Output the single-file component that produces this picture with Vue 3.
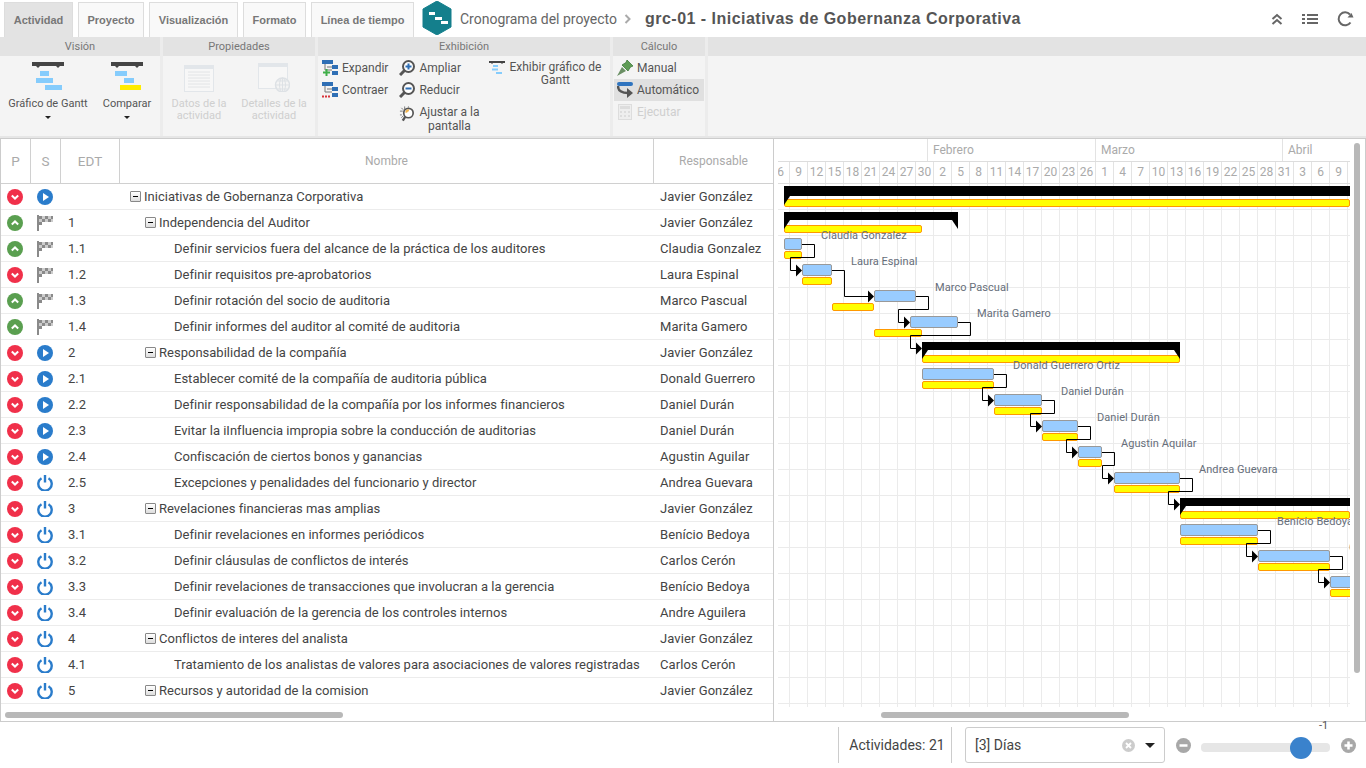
<script setup>
import { computed } from 'vue'

const ROW_H = 26
const X0 = 778 // chart left edge on the page

const tabs = ['Actividad', 'Proyecto', 'Visualización', 'Formato', 'Línea de tiempo']

const rows = [
  { p: 'down', s: 'play', edt: '', name: 'Iniciativas de Gobernanza Corporativa', who: 'Javier González', level: 0 },
  { p: 'up', s: 'flag', edt: '1', name: 'Independencia del Auditor', who: 'Javier González', level: 1 },
  { p: 'up', s: 'flag', edt: '1.1', name: 'Definir servicios fuera del alcance de la práctica de los auditores', who: 'Claudia Gonzalez', level: 2 },
  { p: 'down', s: 'flag', edt: '1.2', name: 'Definir requisitos pre-aprobatorios', who: 'Laura Espinal', level: 2 },
  { p: 'up', s: 'flag', edt: '1.3', name: 'Definir rotación del socio de auditoria', who: 'Marco Pascual', level: 2 },
  { p: 'up', s: 'flag', edt: '1.4', name: 'Definir informes del auditor al comité de auditoria', who: 'Marita Gamero', level: 2 },
  { p: 'down', s: 'play', edt: '2', name: 'Responsabilidad de la compañía', who: 'Javier González', level: 1 },
  { p: 'down', s: 'play', edt: '2.1', name: 'Establecer comité de la compañía de auditoria pública', who: 'Donald Guerrero', level: 2 },
  { p: 'down', s: 'play', edt: '2.2', name: 'Definir responsabilidad de la compañía por los informes financieros', who: 'Daniel Durán', level: 2 },
  { p: 'down', s: 'play', edt: '2.3', name: 'Evitar la iInfluencia impropia sobre la conducción de auditorias', who: 'Daniel Durán', level: 2 },
  { p: 'down', s: 'play', edt: '2.4', name: 'Confiscación de ciertos bonos y ganancias', who: 'Agustin Aguilar', level: 2 },
  { p: 'down', s: 'power', edt: '2.5', name: 'Excepciones y penalidades del funcionario y director', who: 'Andrea Guevara', level: 2 },
  { p: 'down', s: 'power', edt: '3', name: 'Revelaciones financieras mas amplias', who: 'Javier González', level: 1 },
  { p: 'down', s: 'power', edt: '3.1', name: 'Definir revelaciones en informes periódicos', who: 'Benício Bedoya', level: 2 },
  { p: 'down', s: 'power', edt: '3.2', name: 'Definir cláusulas de conflictos de interés', who: 'Carlos Cerón', level: 2 },
  { p: 'down', s: 'power', edt: '3.3', name: 'Definir revelaciones de transacciones que involucran a la gerencia', who: 'Benício Bedoya', level: 2 },
  { p: 'down', s: 'power', edt: '3.4', name: 'Definir evaluación de la gerencia de los controles internos', who: 'Andre Aguilera', level: 2 },
  { p: 'down', s: 'power', edt: '4', name: 'Conflictos de interes del analista', who: 'Javier González', level: 1 },
  { p: 'down', s: 'power', edt: '4.1', name: 'Tratamiento de los analistas de valores para asociaciones de valores registradas', who: 'Carlos Cerón', level: 2 },
  { p: 'down', s: 'power', edt: '5', name: 'Recursos y autoridad de la comision', who: 'Javier González', level: 1 }
]

const months = [
  { label: '', width: 150 },
  { label: 'Febrero', width: 168 },
  { label: 'Marzo', width: 187 },
  { label: 'Abril', width: 67 }
]
const days = [6, 9, 12, 15, 18, 21, 24, 27, 30, 2, 5, 8, 11, 14, 17, 20, 23, 26, 1, 4, 7, 10, 13, 16, 19, 22, 25, 28, 31, 3, 6, 9]

// row index, actual bar x1-x2, baseline bar x1-x2
const summaries = [
  { row: 0, x1: 784, x2: 1350, by1: 784, by2: 1350, open: true },
  { row: 1, x1: 784, x2: 958, by1: 784, by2: 922 },
  { row: 6, x1: 922, x2: 1180, by1: 922, by2: 1180 },
  { row: 12, x1: 1180, x2: 1350, by1: 1180, by2: 1350, open: true }
]
const tasks = [
  { row: 2, x1: 784, x2: 802, by1: 784, by2: 802 },
  { row: 3, x1: 802, x2: 832, by1: 802, by2: 832 },
  { row: 4, x1: 874, x2: 916, by1: 832, by2: 874 },
  { row: 5, x1: 910, x2: 958, by1: 874, by2: 922 },
  { row: 7, x1: 922, x2: 994, by1: 922, by2: 994 },
  { row: 8, x1: 994, x2: 1042, by1: 994, by2: 1042 },
  { row: 9, x1: 1042, x2: 1078, by1: 1042, by2: 1078 },
  { row: 10, x1: 1078, x2: 1102, by1: 1078, by2: 1102 },
  { row: 11, x1: 1114, x2: 1180, by1: 1114, by2: 1180 },
  { row: 13, x1: 1180, x2: 1258, by1: 1180, by2: 1258 },
  { row: 14, x1: 1258, x2: 1330, by1: 1258, by2: 1330 },
  { row: 15, x1: 1330, x2: 1360, by1: 1330, by2: 1360 }
]
const labels = [
  { row: 2, x: 821, text: 'Claudia Gonzalez' },
  { row: 3, x: 851, text: 'Laura Espinal' },
  { row: 4, x: 935, text: 'Marco Pascual' },
  { row: 5, x: 977, text: 'Marita Gamero' },
  { row: 7, x: 1013, text: 'Donald Guerrero Ortiz' },
  { row: 8, x: 1061, text: 'Daniel Durán' },
  { row: 9, x: 1097, text: 'Daniel Durán' },
  { row: 10, x: 1121, text: 'Agustin Aquilar' },
  { row: 11, x: 1199, text: 'Andrea Guevara' },
  { row: 13, x: 1277, text: 'Benício Bedoya' },
  { row: 14, x: 1349, text: 'Carlos Cerón' }
]
// from row, to row, target x
const links = [
  [2, 3, 802], [3, 4, 874], [4, 5, 910], [5, 6, 922], [7, 8, 994], [8, 9, 1042],
  [9, 10, 1078], [10, 11, 1114], [11, 12, 1180], [13, 14, 1258], [14, 15, 1330]
]

const rowTop = (r) => r * ROW_H
const left = (x) => x - X0

const barBox = (x1, x2, top, h) => ({
  left: left(x1) + 'px',
  width: x2 - x1 + 'px',
  top: top + 'px',
  height: h + 'px'
})

const linkPaths = computed(() =>
  links.map(([from, to, tx]) => {
    const src = tasks.find((t) => t.row === from)
    const sx = left(src.x2)
    const ex = left(tx)
    const y1 = rowTop(from) + 8.5
    const y2 = rowTop(to) + 8.5
    const mid = y1 + 13
    let d
    if (sx + 12 <= ex - 6) {
      d = `M${sx} ${y1}H${sx + 12.5}V${y2}H${ex - 6}`
    } else {
      d = `M${sx} ${y1}H${sx + 12.5}V${mid}H${ex - 11.5}V${y2}H${ex - 6}`
    }
    return { d, arrow: `${ex - 6},${y2 - 6} ${ex},${y2} ${ex - 6},${y2 + 6}` }
  })
)

const summaryShapes = computed(() =>
  summaries.map((s) => {
    const x1 = left(s.x1)
    const x2 = left(s.x2)
    const top = rowTop(s.row) + 2
    const h = s.row === 0 ? 10 : 8
    const pts = [`${x1},${top + h} ${x1 + 6},${top + h} ${x1},${top + h + 9}`]
    if (!s.open) pts.push(`${x2},${top + h} ${x2 - 6},${top + h} ${x2},${top + h + 9}`)
    return { key: s.row, x: x1, y: top, w: x2 - x1, h, pts }
  })
)
</script>

<template>
  <div class="app">
    <header class="topbar">
      <div
        v-for="(t, i) in tabs"
        :key="t"
        class="tab"
        :class="{ active: i === 0 }"
      >{{ t }}</div>
      <svg class="logo" width="30" height="34" viewBox="0 0 30 34">
        <polygon points="15,0 29,8 29,26 15,34 1,26 1,8" fill="#147f8c" stroke="#147f8c" stroke-linejoin="round" />
        <rect x="7" y="11" width="6" height="3" fill="#fff" />
        <rect x="13" y="16" width="7" height="3" fill="#fff" />
        <rect x="19" y="20" width="7" height="3" fill="#fff" />
      </svg>
      <span class="crumb">Cronograma del proyecto</span>
      <svg class="crumb-sep" width="8" height="10" viewBox="0 0 8 10">
        <path d="M1.5 1l4 4-4 4" fill="none" stroke="#aaa" stroke-width="2" />
      </svg>
      <span class="title">grc-01 - Iniciativas de Gobernanza Corporativa</span>
      <div class="top-actions">
        <svg width="12" height="12" viewBox="0 0 12 12">
          <path d="M1.500 6l4.500-4 4.500 4M1.500 11l4.500-4 4.500 4" fill="none" stroke="#666" stroke-width="2" />
        </svg>
        <svg width="16" height="12" viewBox="0 0 16 12">
          <path d="M0 2h3M5 2h11M0 6h3M5 6h11M0 10h3M5 10h11" stroke="#666" stroke-width="2" />
        </svg>
        <svg width="17" height="16" viewBox="0 0 17 16">
          <path d="M13.500 11.500A6.500 6.500 0 1 1 13 3.500" fill="none" stroke="#666" stroke-width="2" />
          <polygon points="10.500,6.500 16.500,6.500 14.500,2" fill="#666" />
        </svg>
      </div>
    </header>

    <section class="ribbon">
      <div class="group g-vision">
        <div class="group-head">Visión</div>
        <div class="group-body big-row">
          <div class="big-btn b1">
            <svg width="32" height="29" viewBox="0 0 32 29">
              <path d="M0 0h32v4h-4l-2 2-2-2H8L6 6 4 4H0z" fill="#444" />
              <rect x="8" y="9" width="9" height="5" fill="#85ccfc" />
              <rect x="4" y="16" width="17" height="5" fill="#85ccfc" />
              <rect x="13" y="23" width="17" height="5" fill="#85ccfc" />
            </svg>
            <span class="big-label">Gráfico de Gantt</span>
            <span class="caret"></span>
          </div>
          <div class="big-btn b2">
            <svg width="32" height="29" viewBox="0 0 32 29">
              <path d="M0 0h32v4h-4l-2 2-2-2H8L6 6 4 4H0z" fill="#444" />
              <rect x="4" y="9" width="12" height="5" fill="#85ccfc" />
              <rect x="13" y="16" width="10" height="5" fill="#85ccfc" />
              <rect x="9" y="23" width="21" height="5" fill="#ffec00" />
            </svg>
            <span class="big-label">Comparar</span>
            <span class="caret"></span>
          </div>
        </div>
      </div>

      <div class="group g-props">
        <div class="group-head">Propiedades</div>
        <div class="group-body big-row">
          <div class="big-btn b3 disabled">
            <svg width="32" height="29" viewBox="0 0 32 29">
              <rect x="1.500" y="1.500" width="29" height="26" fill="#f7f7f7" stroke="#e2e6ea" />
              <rect x="1" y="1" width="30" height="4" fill="#e2e6ea" />
              <path d="M5 8h22M5 11h22M5 14h22M5 17h22M5 20h22M5 23h22" stroke="#e2e4e6" />
            </svg>
            <span class="big-label">Datos de la<br />actividad</span>
          </div>
          <div class="big-btn b4 disabled">
            <svg width="32" height="29" viewBox="0 0 32 29">
              <rect x="0.500" y="0.500" width="29" height="25" fill="#f7f7f7" stroke="#e2e6ea" />
              <rect x="0" y="0" width="30" height="4" fill="#e2e6ea" />
              <circle cx="24.500" cy="22" r="7" fill="#f4f4f4" stroke="#dde1e5" stroke-width="1.500" />
              <path d="M17.500 22h14M24.500 15v14M19.500 18h10M19.500 26h10" stroke="#dde1e5" />
              <ellipse cx="24.500" cy="22" rx="3" ry="7" fill="none" stroke="#dde1e5" />
            </svg>
            <span class="big-label">Detalles de la<br />actividad</span>
          </div>
        </div>
      </div>

      <div class="group g-show">
        <div class="group-head">Exhibición</div>
        <div class="group-body show-body">
          <div class="show-col">
            <div class="small-btn">
              <svg width="16" height="16" viewBox="0 0 16 16">
                <rect x="0" y="0" width="11" height="4" fill="#2f6fb5" />
                <rect x="10" y="5" width="6" height="4" fill="#2f6fb5" />
                <rect x="10" y="11" width="6" height="4" fill="#2f6fb5" />
                <path d="M3 4v6h7M5 7h5" fill="none" stroke="#777" />
                <path d="M1 12.500h7M4.500 9v7" stroke="#3fae49" stroke-width="2" />
              </svg>
              <span>Expandir</span>
            </div>
            <div class="small-btn">
              <svg width="16" height="16" viewBox="0 0 16 16">
                <rect x="0" y="0" width="11" height="4" fill="#2f6fb5" />
                <rect x="10" y="5" width="6" height="4" fill="#2f6fb5" />
                <rect x="10" y="11" width="6" height="4" fill="#2f6fb5" />
                <path d="M3 4v6h7M5 7h5" fill="none" stroke="#777" />
                <path d="M0 14.500h9" stroke="#d8333a" stroke-width="2" stroke-dasharray="2 1" />
              </svg>
              <span>Contraer</span>
            </div>
          </div>
          <div class="show-col col-zoom">
            <div class="small-btn">
              <svg width="16" height="16" viewBox="0 0 16 16">
                <circle cx="9.500" cy="6.500" r="5.500" fill="#fff" stroke="#555" stroke-width="2" />
                <path d="M5.500 10.500L1 15" stroke="#555" stroke-width="3" />
                <path d="M6.500 6.500h6M9.500 3.500v6" stroke="#2f6fb5" stroke-width="2" />
              </svg>
              <span>Ampliar</span>
            </div>
            <div class="small-btn">
              <svg width="16" height="16" viewBox="0 0 16 16">
                <circle cx="9.500" cy="6.500" r="5.500" fill="#fff" stroke="#555" stroke-width="2" />
                <path d="M5.500 10.500L1 15" stroke="#555" stroke-width="3" />
                <path d="M6.500 6.500h6" stroke="#2f6fb5" stroke-width="2" />
              </svg>
              <span>Reducir</span>
            </div>
            <div class="small-btn fit-btn">
              <svg width="17" height="17" viewBox="0 0 17 17">
                <path d="M6 1v3M1 6h3M2.500 2.500l2 2M1 10h2M10 2V1M2.500 13l2-2" stroke="#777" />
                <circle cx="10" cy="8" r="5" fill="#fff" stroke="#555" stroke-width="1.800" />
                <path d="M7.500 7.500a3 3 0 0 1 3-2.500" fill="none" stroke="#f0b24a" stroke-width="2" />
                <path d="M6.500 12L4 16" stroke="#555" stroke-width="2.500" />
              </svg>
              <span class="fit-text">Ajustar a la<br />pantalla</span>
            </div>
          </div>
          <div class="show-col col-gantt">
            <svg width="16" height="14" viewBox="0 0 16 14">
              <path d="M0 0h16v2h-2l-1 1-1-1H4L3 3 2 2H0z" fill="#444" />
              <rect x="4" y="4" width="5" height="2" fill="#85ccfc" />
              <rect x="3" y="7.500" width="6" height="2" fill="#85ccfc" />
              <rect x="7" y="11" width="6" height="2" fill="#85ccfc" />
            </svg>
            <span class="gantt-text">Exhibir gráfico de<br />Gantt</span>
          </div>
        </div>
      </div>

      <div class="group g-calc">
        <div class="group-head">Cálculo</div>
        <div class="group-body calc-body">
          <div class="calc-btn">
            <svg width="16" height="17" viewBox="0 0 16 17">
              <path d="M10 0l6 6-2.500 1-2.500 4-6-6 4-2.500z" fill="#5e9c55" stroke="#3f7a3c" stroke-width="0.800" />
              <path d="M5 7L0 16l9-5" fill="#6a8f64" />
            </svg>
            <span>Manual</span>
          </div>
          <div class="calc-btn selected">
            <svg width="16" height="17" viewBox="0 0 16 17">
              <rect x="0" y="0" width="16" height="4" rx="2" fill="#2f74bf" />
              <path d="M1 4c0 5 4 7 10 7" fill="none" stroke="#555" stroke-width="2.400" />
              <polygon points="10,6 16,11 10,16" fill="#555" />
            </svg>
            <span>Automático</span>
          </div>
          <div class="calc-btn disabled">
            <svg width="16" height="16" viewBox="0 0 16 16">
              <rect x="1.500" y="0.500" width="13" height="15" fill="#eee" stroke="#ddd" />
              <rect x="3" y="2" width="10" height="3" fill="#ddd" />
              <path d="M3 7h2v2H3zM7 7h2v2H7zM11 7h2v2h-2zM3 11h2v2H3zM7 11h2v2H7zM11 11h2v2h-2z" fill="#ddd" />
            </svg>
            <span>Ejecutar</span>
          </div>
        </div>
      </div>

      <div class="group g-rest">
        <div class="group-head"></div>
        <div class="group-body"></div>
      </div>
    </section>

    <main class="main">
      <div class="table-panel">
        <div class="thead">
          <div class="th">P</div>
          <div class="th">S</div>
          <div class="th">EDT</div>
          <div class="th">Nombre</div>
          <div class="th last">Responsable</div>
        </div>
        <div class="tbody">
          <div v-for="r in rows" :key="r.edt + r.name" class="tr">
            <div class="td td-icon">
              <svg width="16" height="16" viewBox="0 0 16 16">
                <circle cx="8" cy="8" r="8" :fill="r.p === 'down' ? '#f0304a' : '#5a9f50'" />
                <path
                  :d="r.p === 'down' ? 'M4.800 6.600L8 9.600l3.200-3' : 'M4.800 9.400L8 6.400l3.200 3'"
                  fill="none"
                  stroke="#fff"
                  stroke-width="2"
                />
              </svg>
            </div>
            <div class="td td-icon">
              <svg v-if="r.s === 'play'" width="16" height="16" viewBox="0 0 16 16">
                <circle cx="8" cy="8" r="8" fill="#2a7ccb" />
                <polygon points="6,4 12,8 6,12" fill="#fff" />
              </svg>
              <svg v-else-if="r.s === 'power'" width="16" height="17" viewBox="0 0 16 17">
                <path d="M4.500 4.200a6.700 6.700 0 1 0 7 0" fill="none" stroke="#2a7ccb" stroke-width="2.400" />
                <path d="M8 1v7.500" stroke="#2a7ccb" stroke-width="2.400" />
              </svg>
              <svg v-else width="16" height="17" viewBox="0 0 16 17">
                <path d="M0 1h2v16H0z" fill="#8a8a8a" />
                <path d="M2 2h3v3H2zM8 2h3v3H8zM14 2h2v3h-2zM5 5h3v3H5zM11 5h3v3h-3zM2 8h3v3H2z" fill="#8a8a8a" />
                <path d="M5 2h3v3H5zM11 2h3v3h-3zM2 5h3v3H2zM8 5h3v3H8zM14 5h2v3h-2z" fill="#ccc" />
              </svg>
            </div>
            <div class="td td-edt">{{ r.edt }}</div>
            <div class="td td-name" :class="'level-' + r.level">
              <span v-if="r.level < 2" class="minus"></span>
              <span class="name-text">{{ r.name }}</span>
            </div>
            <div class="td td-who">{{ r.who }}</div>
          </div>
        </div>
        <div class="hscroll hscroll-left"></div>
      </div>

      <div class="gantt-panel">
        <div class="chart">
          <div class="months">
            <div
              v-for="(m, i) in months"
              :key="i"
              class="month"
              :style="{ width: m.width + 'px' }"
            >{{ m.label }}</div>
          </div>
          <div class="days">
            <div v-for="(d, i) in days" :key="i" class="day">{{ d }}</div>
          </div>
          <div class="chart-body">
            <template v-for="s in summaries" :key="s.row">
              <div class="bar-base" :style="barBox(s.by1, s.by2, rowTop(s.row) + 15, 8)"></div>
            </template>
            <template v-for="t in tasks" :key="t.row">
              <div class="bar-base" :style="barBox(t.by1, t.by2, rowTop(t.row) + 15, 8)"></div>
              <div class="bar-task" :style="barBox(t.x1, t.x2, rowTop(t.row) + 2, 12)"></div>
            </template>
            <svg class="links" width="572" height="523">
              <g v-for="s in summaryShapes" :key="s.key">
                <rect :x="s.x" :y="s.y" :width="s.w" :height="s.h" fill="#000" />
                <polygon v-for="p in s.pts" :key="p" :points="p" fill="#000" />
              </g>
              <g v-for="(l, i) in linkPaths" :key="i">
                <path :d="l.d" fill="none" stroke="#000" stroke-width="1" />
                <polygon :points="l.arrow" fill="#000" />
              </g>
            </svg>
            <span
              v-for="l in labels"
              :key="l.row"
              class="bar-label"
              :style="{ left: left(l.x) + 'px', top: rowTop(l.row) - 7 + 'px' }"
            >{{ l.text }}</span>
          </div>
        </div>
        <div class="vscroll"></div>
        <div class="hscroll hscroll-right"></div>
      </div>
    </main>

    <footer class="footer">
      <div class="count">Actividades: 21</div>
      <div class="select">
        <span class="select-value">[3] Días</span>
        <svg class="select-clear" width="13" height="13" viewBox="0 0 13 13">
          <circle cx="6.500" cy="6.500" r="6.500" fill="#ccc" />
          <path d="M4 4l5 5M9 4l-5 5" stroke="#fff" stroke-width="1.800" />
        </svg>
        <span class="select-caret"></span>
      </div>
      <svg class="zoom-btn" width="15" height="15" viewBox="0 0 15 15">
        <circle cx="7.500" cy="7.500" r="7.500" fill="#a8a8a8" />
        <path d="M3.500 7.500h8" stroke="#fff" stroke-width="2.500" />
      </svg>
      <div class="slider">
        <span class="slider-value">-1</span>
        <span class="slider-thumb"></span>
      </div>
      <svg class="zoom-btn" width="15" height="15" viewBox="0 0 15 15">
        <circle cx="7.500" cy="7.500" r="7.500" fill="#a8a8a8" />
        <path d="M3.500 7.500h8M7.500 3.500v8" stroke="#fff" stroke-width="2.500" />
      </svg>
    </footer>
  </div>
</template>

<style scoped>
.app {
  width: 1366px;
  height: 768px;
  overflow: hidden;
  display: flex;
  flex-direction: column;
  background: #fff;
  font-family: Roboto, "Liberation Sans", sans-serif;
  color: #444;
}

.topbar {
  height: 37px;
  flex: none;
  display: flex;
  align-items: flex-end;
  padding-left: 4px;
  box-sizing: border-box;
}

.tab {
  height: 35px;
  box-sizing: border-box;
  margin-right: 5px;
  display: flex;
  align-items: center;
  justify-content: center;
  font-family: "Liberation Sans", sans-serif;
  font-size: 11px;
  font-weight: 700;
  color: #777;
  background: #f9f9f9;
  border: 1px solid #ddd;
  border-bottom: none;
}

.tab:nth-child(1) { width: 69px; }
.tab:nth-child(2) { width: 66px; }
.tab:nth-child(3) { width: 89px; }
.tab:nth-child(4) { width: 63px; }
.tab:nth-child(5) { width: 103px; }

.tab.active {
  background: #e3e3e3;
}

.logo {
  margin: 0 0 2px 3px;
}

.crumb {
  margin-left: 8px;
  align-self: center;
  font-size: 14px;
  color: #666;
}

.crumb-sep {
  align-self: center;
  margin: 0 13px 0 7px;
}

.title {
  align-self: center;
  font-family: "Liberation Sans", sans-serif;
  font-size: 16px;
  font-weight: 700;
  letter-spacing: 0.48px;
  color: #555;
}

.top-actions {
  margin-left: auto;
  align-self: center;
  display: flex;
  align-items: center;
  gap: 19px;
  padding: 0 12px 0 0;
}

.ribbon {
  height: 99px;
  flex: none;
  display: flex;
  gap: 3px;
  background: #ececec;
  border-bottom: 2px solid #e6e6e6;
}

.group {
  display: flex;
  flex-direction: column;
  background: #f4f4f4;
}

.g-vision { width: 160px; }
.g-props { width: 152px; }
.g-show { width: 292px; }
.g-calc { width: 92px; }
.g-rest { flex: 1; }

.group-head {
  height: 19px;
  flex: none;
  background: #e3e3e3;
  text-align: center;
  font-size: 11px;
  line-height: 19px;
  color: #777;
}

.group-body {
  flex: 1;
  position: relative;
  font-size: 12px;
  color: #555;
}

.big-row {
  display: flex;
  padding-top: 6px;
}

.big-btn {
  display: flex;
  flex-direction: column;
  align-items: center;
  flex: none;
}

.b1 { width: 96px; }
.b2 { width: 62px; }
.b3 { width: 72px; padding-top: 2px; }
.b4 { width: 78px; padding-top: 1px; }

.big-label {
  margin-top: 7px;
  text-align: center;
  line-height: 12px;
  font-size: 11px;
}

.b3 .big-label { margin-top: 5px; }
.b4 .big-label { margin-top: 6px; }

.disabled {
  color: #cfcfcf;
}

.caret {
  margin-top: 6px;
  width: 0;
  height: 0;
  border-left: 3px solid transparent;
  border-right: 3px solid transparent;
  border-top: 3px solid #222;
}

.show-body {
  display: flex;
  padding: 1px 0 0 4px;
}

.show-col {
  display: flex;
  flex-direction: column;
  flex: none;
}

.col-zoom {
  margin-left: 11px;
  width: 80px;
}

.col-gantt {
  flex-direction: row;
  margin-left: 10px;
  padding-top: 4px;
}

.small-btn {
  height: 22px;
  display: flex;
  align-items: center;
  gap: 4px;
  white-space: nowrap;
}

.fit-btn {
  align-items: flex-start;
  padding-top: 4px;
}

.fit-text {
  width: 60px;
  text-align: center;
  line-height: 14px;
  white-space: nowrap;
}

.gantt-text {
  margin-left: 4px;
  line-height: 13px;
  text-align: center;
}

.calc-body {
  display: flex;
  flex-direction: column;
  padding: 1px 1px 0 1px;
}

.calc-btn {
  height: 22px;
  display: flex;
  align-items: center;
  gap: 4px;
  padding-left: 3px;
}

.calc-btn.selected {
  background: #e0e0e0;
}

.main {
  flex: none;
  height: 584px;
  display: flex;
  box-sizing: border-box;
  border: 1px solid #ccc;
}

.table-panel {
  position: relative;
  width: 773px;
  flex: none;
  box-sizing: border-box;
  border-right: 1px solid #ccc;
}

.thead,
.tr {
  display: grid;
  grid-template-columns: 30px 30px 59px 534px 119px;
}

.thead {
  height: 45px;
  box-sizing: border-box;
  border-bottom: 1px solid #d0d0d0;
}

.th {
  display: flex;
  align-items: center;
  justify-content: center;
  box-sizing: border-box;
  border-right: 1px solid #d0d0d0;
  font-size: 12px;
  color: #aaa;
}

.th:nth-child(-n+3) {
  font-size: 13.5px;
}

.th.last {
  border-right: none;
}

.tr {
  height: 26px;
  box-sizing: border-box;
  border-bottom: 1px solid #ececec;
}

.td {
  display: flex;
  align-items: center;
  font-size: 13px;
  letter-spacing: 0.01px;
  color: #444;
  white-space: nowrap;
  overflow: hidden;
}

.td-icon {
  justify-content: center;
}

.td-icon svg {
  margin-left: -2px;
}

.td-edt {
  padding-left: 7px;
}

.td-who {
  padding-left: 6px;
  letter-spacing: 0.08px;
}

.level-0 { padding-left: 10px; }
.level-1 { padding-left: 25px; }
.level-2 { padding-left: 54px; }

.minus {
  position: relative;
  width: 9px;
  height: 9px;
  margin-right: 3px;
  flex: none;
  border: 1px solid #888;
  border-radius: 1px;
  background: linear-gradient(#fff, #ddd);
}

.minus::after {
  content: "";
  position: absolute;
  left: 2px;
  top: 4px;
  width: 5px;
  height: 1px;
  background: #000;
}

.gantt-panel {
  position: relative;
  flex: 1;
  overflow: hidden;
}

.chart {
  width: 572px;
  margin-left: 4px;
  overflow: hidden;
}

.months {
  display: flex;
  height: 22px;
}

.month {
  flex: none;
  box-sizing: border-box;
  padding-left: 5px;
  border-right: 1px solid #e3e3e3;
  font-size: 12px;
  line-height: 22px;
  color: #aaa;
}

.month:last-child {
  border-right: none;
}

.days {
  display: flex;
  height: 23px;
  margin-left: -6px;
  box-sizing: border-box;
  border-top: 1px solid #ddd;
  border-bottom: 1px solid #ddd;
}

.day {
  flex: none;
  width: 18px;
  box-sizing: border-box;
  border-right: 1px solid #e3e3e3;
  text-align: center;
  font-size: 12px;
  line-height: 21px;
  color: #aaa;
}

.chart-body {
  position: relative;
  height: 523px;
  overflow: hidden;
  background-image:
    linear-gradient(to right, #ebebeb 1px, transparent 1px),
    linear-gradient(to bottom, transparent 25px, #ebebeb 25px);
  background-size: 18px 100%, 100% 26px;
  background-position: 11px 0, 0 0;
}

.bar-base,
.bar-task {
  position: absolute;
  box-sizing: border-box;
  border-radius: 2px;
}

.bar-base {
  background: #ffff00;
  border: 1px solid #ff9900;
}

.bar-task {
  background: #99ccff;
  border: 1px solid #999;
}

.links {
  position: absolute;
  left: 0;
  top: 0;
}

.bar-label {
  position: absolute;
  font-size: 11px;
  line-height: 14px;
  letter-spacing: 0.06px;
  color: #666e7a;
  white-space: nowrap;
}

.vscroll {
  position: absolute;
  left: 580px;
  top: 4px;
  width: 6px;
  height: 530px;
  border-radius: 3px;
  background: #b8b8b8;
}

.hscroll {
  position: absolute;
  top: 573px;
  height: 6px;
  border-radius: 3px;
  background: #b8b8b8;
}

.hscroll-left {
  left: 4px;
  width: 338px;
}

.hscroll-right {
  left: 107px;
  width: 248px;
}

.footer {
  flex: 1;
  display: flex;
  align-items: center;
  justify-content: flex-end;
  padding-right: 10px;
  font-size: 14px;
  color: #444;
}

.count {
  width: 114px;
  height: 36px;
  box-sizing: border-box;
  padding-left: 4px;
  border-left: 1px solid #ccc;
  border-right: 1px solid #ccc;
  text-align: center;
  line-height: 36px;
}

.select {
  width: 200px;
  height: 36px;
  margin-left: 13px;
  box-sizing: border-box;
  display: flex;
  align-items: center;
  padding: 0 9px;
  border: 1px solid #ccc;
  border-radius: 3px;
}

.select-value {
  flex: 1;
}

.select-clear {
  margin-right: 10px;
}

.select-caret {
  width: 0;
  height: 0;
  border-left: 5px solid transparent;
  border-right: 5px solid transparent;
  border-top: 5px solid #222;
}

.zoom-btn {
  margin-left: 11px;
  flex: none;
}

.slider {
  position: relative;
  width: 129px;
  height: 9px;
  margin-left: 10px;
  margin-top: 5px;
  border-radius: 4px;
  background: #e6e6e6;
}

.slider-thumb {
  position: absolute;
  left: 89px;
  top: -6px;
  width: 22px;
  height: 22px;
  border-radius: 50%;
  background: #3a82cc;
}

.slider-value {
  position: absolute;
  left: 118px;
  top: -23px;
  font-size: 11px;
  line-height: 12px;
  color: #555;
}
</style>

<style>
body {
  margin: 0;
}
</style>
